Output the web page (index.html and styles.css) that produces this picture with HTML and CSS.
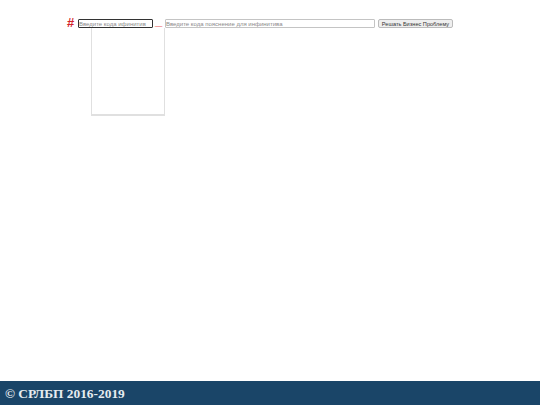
FILE: index.html
```html
<!DOCTYPE html>
<html lang="en">
<head>
    <meta charset="UTF-8">
    <title>СРЛБП</title>
    <link rel="stylesheet" href="styles.css">
</head>
<body>
    <form class="search">
        <span class="mark">#</span>
        <div class="code-field">
            <input type="text" class="code focused" placeholder="Введите кода ифинитив">
            <div class="suggest"></div>
        </div>
        <span class="dash">_</span>
        <input type="text" class="note" placeholder="Введите кода пояснение для инфинитива">
        <button type="button" class="solve">Решать Бизнес Проблему</button>
    </form>
    <footer class="footer">© СРЛБП 2016-2019</footer>
</body>
</html>
```

FILE: styles.css
```css
* {
    box-sizing: border-box;
}

body {
    display: flex;
    flex-direction: column;
    justify-content: space-between;
    height: 405px;
    margin: 0;
    overflow: hidden;
    background: #fff;
    font-family: "Liberation Sans", Arial, sans-serif;
}

.search {
    display: flex;
    align-items: center;
    height: 9px;
    margin: 19px 0 0 67px;
}

.mark {
    width: 11px;
    margin-top: -2px;
    color: #d2232a;
    font-size: 13px;
    font-weight: bold;
    line-height: 12px;
}

.code-field {
    position: relative;
    width: 75px;
    height: 9px;
}

input {
    display: block;
    height: 9px;
    padding: 1px 0 0 0;
    border: 1px solid #c4c4c4;
    border-radius: 1px;
    background: #fff;
    font-family: "Liberation Sans", Arial, sans-serif;
    font-size: 6px;
    outline: none;
}

input::placeholder {
    color: #8a8a8a;
}

.code {
    width: 75px;
}

.focused {
    border-color: #333;
}

.suggest {
    position: absolute;
    top: 9px;
    left: 13px;
    width: 74px;
    height: 88px;
    border: 1px solid #e0e0e0;
    border-bottom-width: 2px;
    border-top: 0;
    background: #fff;
}

.dash {
    align-self: flex-start;
    width: 12px;
    margin-top: -3px;
    padding-left: 2px;
    color: #e8555a;
    font-size: 13px;
    font-weight: bold;
    line-height: 9px;
}

.note {
    width: 210px;
}

.solve {
    width: 75px;
    height: 9px;
    margin-left: 3px;
    padding: 1px 0 0 0;
    border: 1px solid #bbb;
    border-radius: 2px;
    background: #efefef;
    color: #333;
    font-family: "Liberation Sans", Arial, sans-serif;
    font-size: 5.6px;
    line-height: 7px;
    white-space: nowrap;
}

.footer {
    height: 24px;
    padding-left: 5px;
    background: #1a4568;
    color: #e6ecf0;
    font-family: "Liberation Serif", "Times New Roman", serif;
    font-size: 13.4px;
    font-weight: bold;
    line-height: 25px;
}
```
